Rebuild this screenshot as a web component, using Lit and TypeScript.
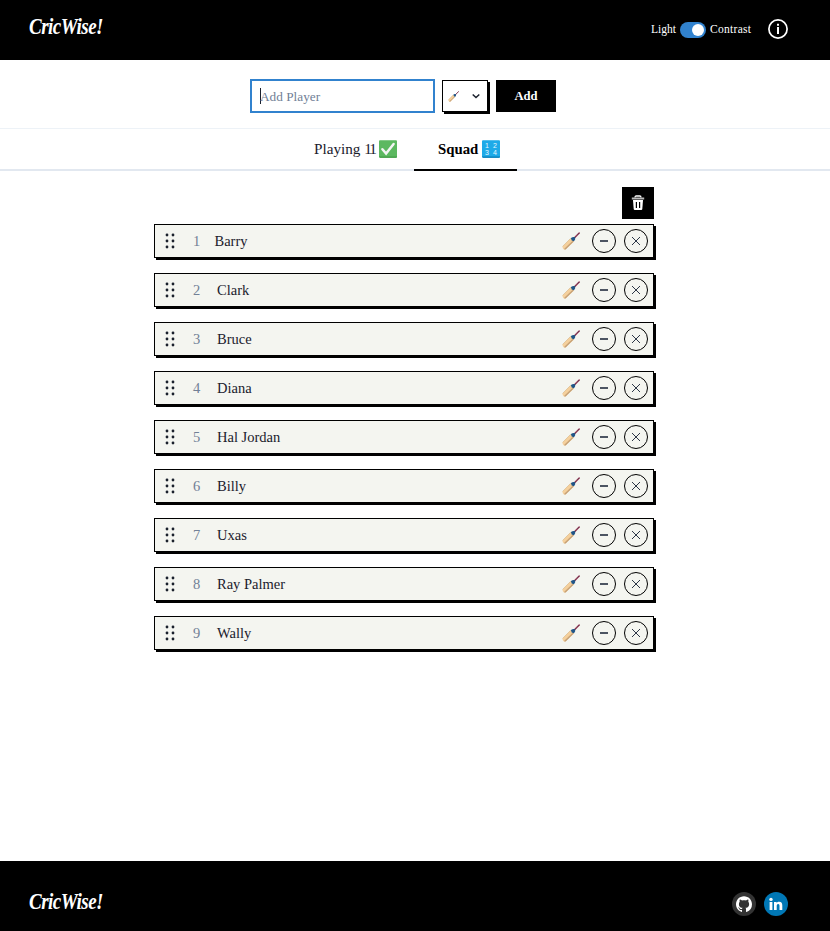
import { LitElement, html, svg, css } from "lit";
import { customElement, property } from "lit/decorators.js";

const bat = (size: number) => html`<svg width=${size} height=${size} viewBox="0 0 18 18" aria-label="Batter">
  <path d="M11 7.3 17.2 1" stroke="#9a4560" stroke-width="1.6" stroke-linecap="round" fill="none" />
  <path d="M12.3 6 17.3 .9" stroke="#5b2740" stroke-width="1" stroke-dasharray="1 1" fill="none" />
  <path d="M.6 14.4 8.7 6.3 11.8 9.4 3.6 17.5Q2.5 17.9 1.4 16.9 .2 15.6.6 14.4Z" fill="#f5d09c" />
  <path d="M1.8 17.2 3.6 17.5 11.8 9.4 10.9 8.5Z" fill="#c6a177" />
  <path d="M.6 14.4 8.7 6.3" stroke="#d9b98d" stroke-width=".7" />
  <path d="M8.9 5.9 11 5 13.2 5.3 13.1 7.4 12 9.3 9.7 8.4Z" fill="#1f5587" />
</svg>`;

@customElement("squad-row")
export class SquadRow extends LitElement {
  @property({ type: Number }) number = 1;
  @property() name = "";

  static styles = css`
    :host {
      display: flex;
      align-items: center;
      box-sizing: border-box;
      height: 34px;
      border: 1px solid #000;
      box-shadow: 2px 2px 0 #000;
      background: #f4f5f0;
      padding: 0 5px 0 9px;
      color: #1a202c;
      font-size: 14.5px;
      line-height: 20px;
    }
    svg { display: block; flex: none; }
    .number { width: 24px; margin-left: 17px; color: #718096; }
    .name { flex: 1; white-space: nowrap; }
    .first { width: 21.5px; }
    .actions { display: flex; align-items: center; gap: 8px; }
    .bat { margin-right: 4px; }
  `;

  render() {
    return html`
      <svg width="12" height="16" viewBox="0 0 12 16" fill="#1a202c">
        ${[2, 8, 14].map((y) => svg`<circle cx="3" cy=${y} r="1.4"/><circle cx="9" cy=${y} r="1.4"/>`)}
      </svg>
      <span class="number ${this.number === 1 ? "first" : ""}">${this.number}</span>
      <span class="name">${this.name}</span>
      <span class="actions">
        <span class="bat">${bat(18)}</span>
        <svg width="24" height="24" viewBox="0 0 24 24" fill="none">
          <circle cx="12" cy="12" r="11.5" stroke="#000" />
          <path d="M8 12h8" stroke="#2d3748" stroke-width="1.7" />
        </svg>
        <svg width="24" height="24" viewBox="0 0 24 24" fill="none">
          <circle cx="12" cy="12" r="11.5" stroke="#000" />
          <path d="m8 8 8 8m0-8-8 8" stroke="#2d3748" stroke-width="1" />
        </svg>
      </span>
    `;
  }
}

@customElement("app-root")
export class AppRoot extends LitElement {
  players = ["Barry", "Clark", "Bruce", "Diana", "Hal Jordan", "Billy", "Uxas", "Ray Palmer", "Wally"];

  static styles = css`
    :host {
      display: flex;
      flex-direction: column;
      height: 931px;
      overflow: hidden;
      background: #fff;
      color: #1a202c;
      font-family: "Liberation Serif", serif;
    }
    svg { display: block; flex: none; }
    .bar {
      display: flex;
      justify-content: space-between;
      box-sizing: border-box;
      background: #000;
      color: #fff;
      padding: 0 42px 0 29px;
      flex: none;
    }
    .header { height: 60px; padding-right: 41px; }
    .footer { height: 70px; margin-top: auto; }
    .logo {
      font-size: 19px;
      font-weight: 700;
      font-style: italic;
      line-height: 22px;
      letter-spacing: -0.5px;
      height: 22px;
      margin-top: 15px;
      transform: scaleY(1.25);
    }
    .footer .logo { margin-top: 29px; }
    .settings { display: flex; align-items: center; height: 58px; font-size: 11.5px; }
    .switch {
      display: flex;
      justify-content: flex-end;
      box-sizing: border-box;
      width: 26px;
      height: 16px;
      padding: 2px;
      margin: 2px 4px 0;
      border-radius: 8px;
      background: #3182ce;
    }
    .knob { width: 12px; height: 12px; border-radius: 50%; background: #fff; }
    .contrast { width: 42px; letter-spacing: 0.3px; }
    .info { margin-left: 15px; }
    .social { display: flex; gap: 8px; padding-top: 31px; }
    .form {
      display: flex;
      box-sizing: border-box;
      height: 69px;
      padding: 19px 0 0 250px;
      border-bottom: 1px solid #edf2f7;
      flex: none;
    }
    .field {
      display: flex;
      align-items: center;
      box-sizing: border-box;
      width: 185px;
      height: 34px;
      border: 2px solid #3182ce;
      padding: 1px 0 0 8px;
      color: #718096;
      font-size: 13.3px;
    }
    .caret { width: 1px; height: 16px; margin: -1px -1px 0 0; background: #1a202c; }
    .select {
      display: flex;
      align-items: center;
      justify-content: space-between;
      box-sizing: border-box;
      width: 46px;
      height: 32px;
      margin: 1px 8px 0 7px;
      padding: 0 5px;
      border: 1px solid #000;
      box-shadow: 2px 2px 0 #000;
    }
    .add {
      width: 60px;
      height: 32px;
      margin-top: 1px;
      background: #000;
      color: #fff;
      font-size: 12.6px;
      font-weight: 700;
      line-height: 33px;
      text-align: center;
    }
    .tabs {
      display: flex;
      box-sizing: border-box;
      height: 42px;
      padding-left: 290px;
      border-bottom: 2px solid #e2e8f0;
      font-size: 15.2px;
      flex: none;
    }
    .tab {
      display: flex;
      align-items: center;
      gap: 4px;
      box-sizing: border-box;
      height: 42px;
      padding: 0 0 2px 24px;
      white-space: nowrap;
    }
    .playing { width: 124px; }
    .label { width: 61px; }
    .eleven { letter-spacing: -1.9px; }
    .squad {
      width: 103px;
      border-bottom: 2px solid #000;
      padding-bottom: 0;
      color: #000;
      font-size: 14.8px;
      font-weight: 700;
    }
    .squad .label { width: 40px; }
    .digits { font: 7px "Liberation Sans", sans-serif; }
    .list {
      display: flex;
      flex-direction: column;
      width: 500px;
      margin: 16px 0 0 154px;
    }
    .trash {
      display: flex;
      align-items: center;
      justify-content: center;
      align-self: flex-end;
      width: 32px;
      height: 32px;
      background: #000;
      margin-bottom: 5px;
    }
    squad-row { margin-bottom: 15px; }
  `;

  render() {
    return html`
      <header class="bar header">
        <div class="logo">CricWise!</div>
        <div class="settings">
          <span>Light</span>
          <span class="switch"><span class="knob"></span></span>
          <span class="contrast">Contrast</span>
          <svg class="info" width="22" height="22" viewBox="0 0 22 22" fill="none" stroke="#fff">
            <circle cx="11" cy="11" r="9.1" stroke-width="1.7" />
            <path d="M11 9v7M11 5.7v2" stroke-width="2" />
          </svg>
        </div>
      </header>
      <div class="form">
        <div class="field"><span class="caret"></span>Add Player</div>
        <div class="select">
          ${bat(11)}
          <svg width="12" height="12" viewBox="0 0 12 12" fill="none" stroke="#1a202c" stroke-width="1.5">
            <path d="m2.7 4.5 3.3 3 3.3-3" />
          </svg>
        </div>
        <div class="add">Add</div>
      </div>
      <nav class="tabs">
        <div class="tab playing">
          <span class="label">Playing <span class="eleven">11</span></span>
          <svg width="18" height="18" viewBox="0 0 18 18">
            <rect width="18" height="17.5" y=".2" rx="1" fill="#5cb860" />
            <path d="M0 16.5h18v.7l-1 .6H1Z" fill="#419b46" />
            <path d="m3.4 9.2 3.7 4.4L14.6 4" fill="none" stroke="#f4f4f4" stroke-width="2.5" stroke-linecap="round" />
          </svg>
        </div>
        <div class="tab squad">
          <span class="label">Squad</span>
          <svg width="18" height="18" viewBox="0 0 18 18">
            <rect width="18" height="17.5" y=".2" rx="1" fill="#1eaae8" />
            <path d="M0 16.5h18v.7l-1 .6H1Z" fill="#087cb5" />
            <g class="digits" fill="#e6f7ff">
              <text x="3" y="7.5">1</text><text x="11" y="7.5">2</text>
              <text x="3" y="15">3</text><text x="11" y="15">4</text>
            </g>
          </svg>
        </div>
      </nav>
      <main class="list">
        <div class="trash">
          <svg width="14" height="16" viewBox="0 0 14 16" fill="none">
            <path d="M4 2.5Q4 1 5.2 1h3.6Q10 1 10 2.5" stroke="#fff" stroke-width="1.3" />
            <path d="M.8 3.5h12.4" stroke="#bbb" stroke-width="2" />
            <path d="M2 5h10l-.7 9q-.1 1-1.1 1H3.8q-1 0-1.1-1Z" fill="#fff" />
            <path d="M5.4 7v6M8.6 7v6" stroke="#000" stroke-width="1.2" />
          </svg>
        </div>
        ${this.players.map((name, i) => html`<squad-row .number=${i + 1} .name=${name}></squad-row>`)}
      </main>
      <footer class="bar footer">
        <div class="logo">CricWise!</div>
        <div class="social">
          <svg width="24" height="24" viewBox="0 0 24 24">
            <circle cx="12" cy="12" r="12" fill="#333" />
            <path transform="translate(4 4.3)" fill="#fff" fill-rule="evenodd" d="M8 0C3.58 0 0 3.58 0 8c0 3.54 2.29 6.53 5.47 7.59.4.07.55-.17.55-.38 0-.19-.01-.82-.01-1.49-2.01.37-2.53-.49-2.69-.94-.09-.23-.48-.94-.82-1.13-.28-.15-.68-.52-.01-.53.63-.01 1.08.58 1.23.82.72 1.21 1.87.87 2.33.66.07-.52.28-.87.51-1.07-1.78-.2-3.64-.89-3.64-3.95 0-.87.31-1.59.82-2.15-.08-.2-.36-1.02.08-2.12 0 0 .67-.21 2.2.82.64-.18 1.32-.27 2-.27s1.36.09 2 .27c1.53-1.04 2.2-.82 2.2-.82.44 1.1.16 1.92.08 2.12.51.56.82 1.27.82 2.15 0 3.07-1.87 3.75-3.65 3.95.29.25.54.73.54 1.48 0 1.07-.01 1.93-.01 2.2 0 .21.15.46.55.38A8.01 8.01 0 0 0 16 8c0-4.42-3.58-8-8-8Z" />
          </svg>
          <svg width="24" height="24" viewBox="0 0 24 24" fill="#fff">
            <circle cx="12" cy="12" r="12" fill="#0077b5" />
            <circle cx="7" cy="7.4" r="1.7" />
            <path d="M5.6 10h2.8v8H5.6ZM10 10h2.6v1.1c.5-.8 1.4-1.3 2.6-1.3 2.4 0 3.1 1.5 3.1 3.7V18h-2.8v-4c0-1.2-.3-2-1.3-2-1.1 0-1.5.8-1.5 2v4H10Z" />
          </svg>
        </div>
      </footer>
    `;
  }
}
